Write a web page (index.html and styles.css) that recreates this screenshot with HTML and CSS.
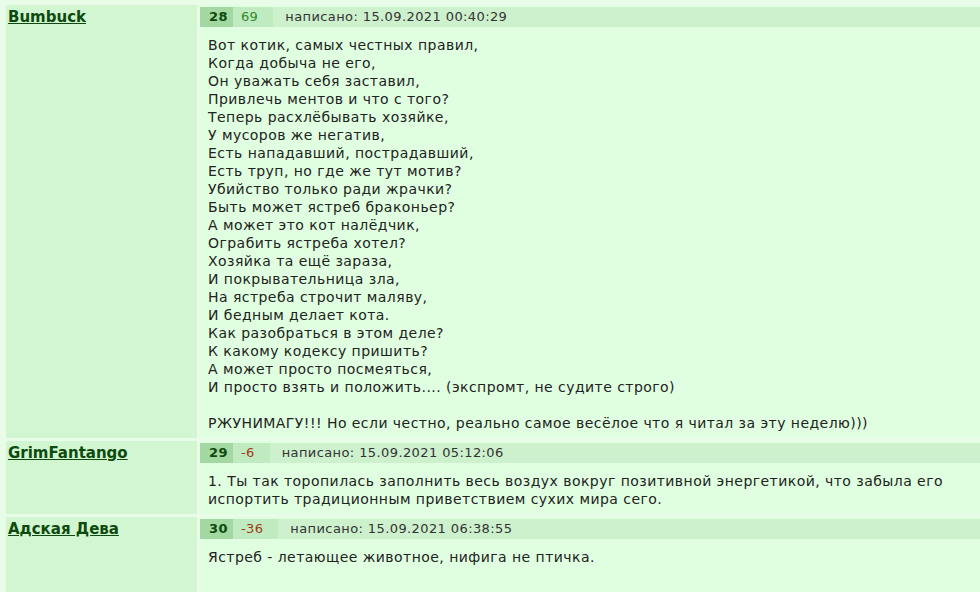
FILE: index.html
```html
<!DOCTYPE html>
<html lang="ru">
<head>
  <meta charset="UTF-8" />
  <title>Комментарии</title>
  <link rel="stylesheet" href="styles.css">
</head>
<body>
  <div class="comments">

    <div class="comment">
      <div class="author"><a href="#">Bumbuck</a></div>
      <div class="post">
        <div class="post-head">
          <span class="num">28</span>
          <span class="rating plus">69</span>
          <span class="date">написано: 15.09.2021 00:40:29</span>
        </div>
        <div class="post-text">
          Вот котик, самых честных правил,<br>
          Когда добыча не его,<br>
          Он уважать себя заставил,<br>
          Привлечь ментов и что с того?<br>
          Теперь расхлёбывать хозяйке,<br>
          У мусоров же негатив,<br>
          Есть нападавший, пострадавший,<br>
          Есть труп, но где же тут мотив?<br>
          Убийство только ради жрачки?<br>
          Быть может ястреб браконьер?<br>
          А может это кот налёдчик,<br>
          Ограбить ястреба хотел?<br>
          Хозяйка та ещё зараза,<br>
          И покрывательница зла,<br>
          На ястреба строчит маляву,<br>
          И бедным делает кота.<br>
          Как разобраться в этом деле?<br>
          К какому кодексу пришить?<br>
          А может просто посмеяться,<br>
          И просто взять и положить.... (экспромт, не судите строго)<br>
          <br>
          РЖУНИМАГУ!!! Но если честно, реально самое весёлое что я читал за эту неделю)))
        </div>
      </div>
    </div>

    <div class="comment">
      <div class="author"><a href="#">GrimFantango</a></div>
      <div class="post">
        <div class="post-head">
          <span class="num">29</span>
          <span class="rating minus">-6</span>
          <span class="date">написано: 15.09.2021 05:12:06</span>
        </div>
        <div class="post-text">
          1. Ты так торопилась заполнить весь воздух вокруг позитивной энергетикой, что забыла его
          испортить традиционным приветствием сухих мира сего.
        </div>
      </div>
    </div>

    <div class="comment">
      <div class="author"><a href="#">Адская Дева</a></div>
      <div class="post">
        <div class="post-head">
          <span class="num">30</span>
          <span class="rating minus">-36</span>
          <span class="date">написано: 15.09.2021 06:38:55</span>
        </div>
        <div class="post-text short">
          Ястреб - летающее животное, нифига не птичка.
        </div>
      </div>
    </div>

  </div>
</body>
</html>
```

FILE: styles.css
```css
body {
  margin: 0;
  background: #e8fce8;
  font-family: "DejaVu Sans", Verdana, sans-serif;
  font-size: 14px;
  color: #222;
  overflow: hidden;
}

.comments {
  display: flex;
  flex-direction: column;
  gap: 3px;
  padding: 5px 0 0 6px;
}

.comment {
  display: grid;
  grid-template-columns: 191px 1fr;
  column-gap: 3px;
}

.author {
  background: #d2f5d2;
  padding: 3px 2px;
}

.author a {
  font-size: 15px;
  font-weight: bold;
  color: #0d4a0d;
}

.post {
  background: #e0ffe0;
  padding-top: 2px;
  padding-bottom: 6px;
}

.post-head {
  display: flex;
  align-items: center;
  height: 20px;
  line-height: 20px;
  font-size: 13px;
  letter-spacing: 0.4px;
  background: #cdf0cd;
}

.num {
  background: #a3d8a3;
  color: #0d4a0d;
  font-weight: bold;
  padding: 0 5px 0 9px;
}

.rating {
  background: #c0eac0;
  padding: 0 15px 0 8px;
}

.plus {
  color: #2e8b2e;
}

.minus {
  color: #a03a1a;
}

.date {
  margin-left: 12px;
  color: #333;
}

.post-text {
  padding: 9px 8px 0 8px;
  line-height: 18px;
  letter-spacing: 0.45px;
}

.post-text.short {
  min-height: 60px;
}
```
